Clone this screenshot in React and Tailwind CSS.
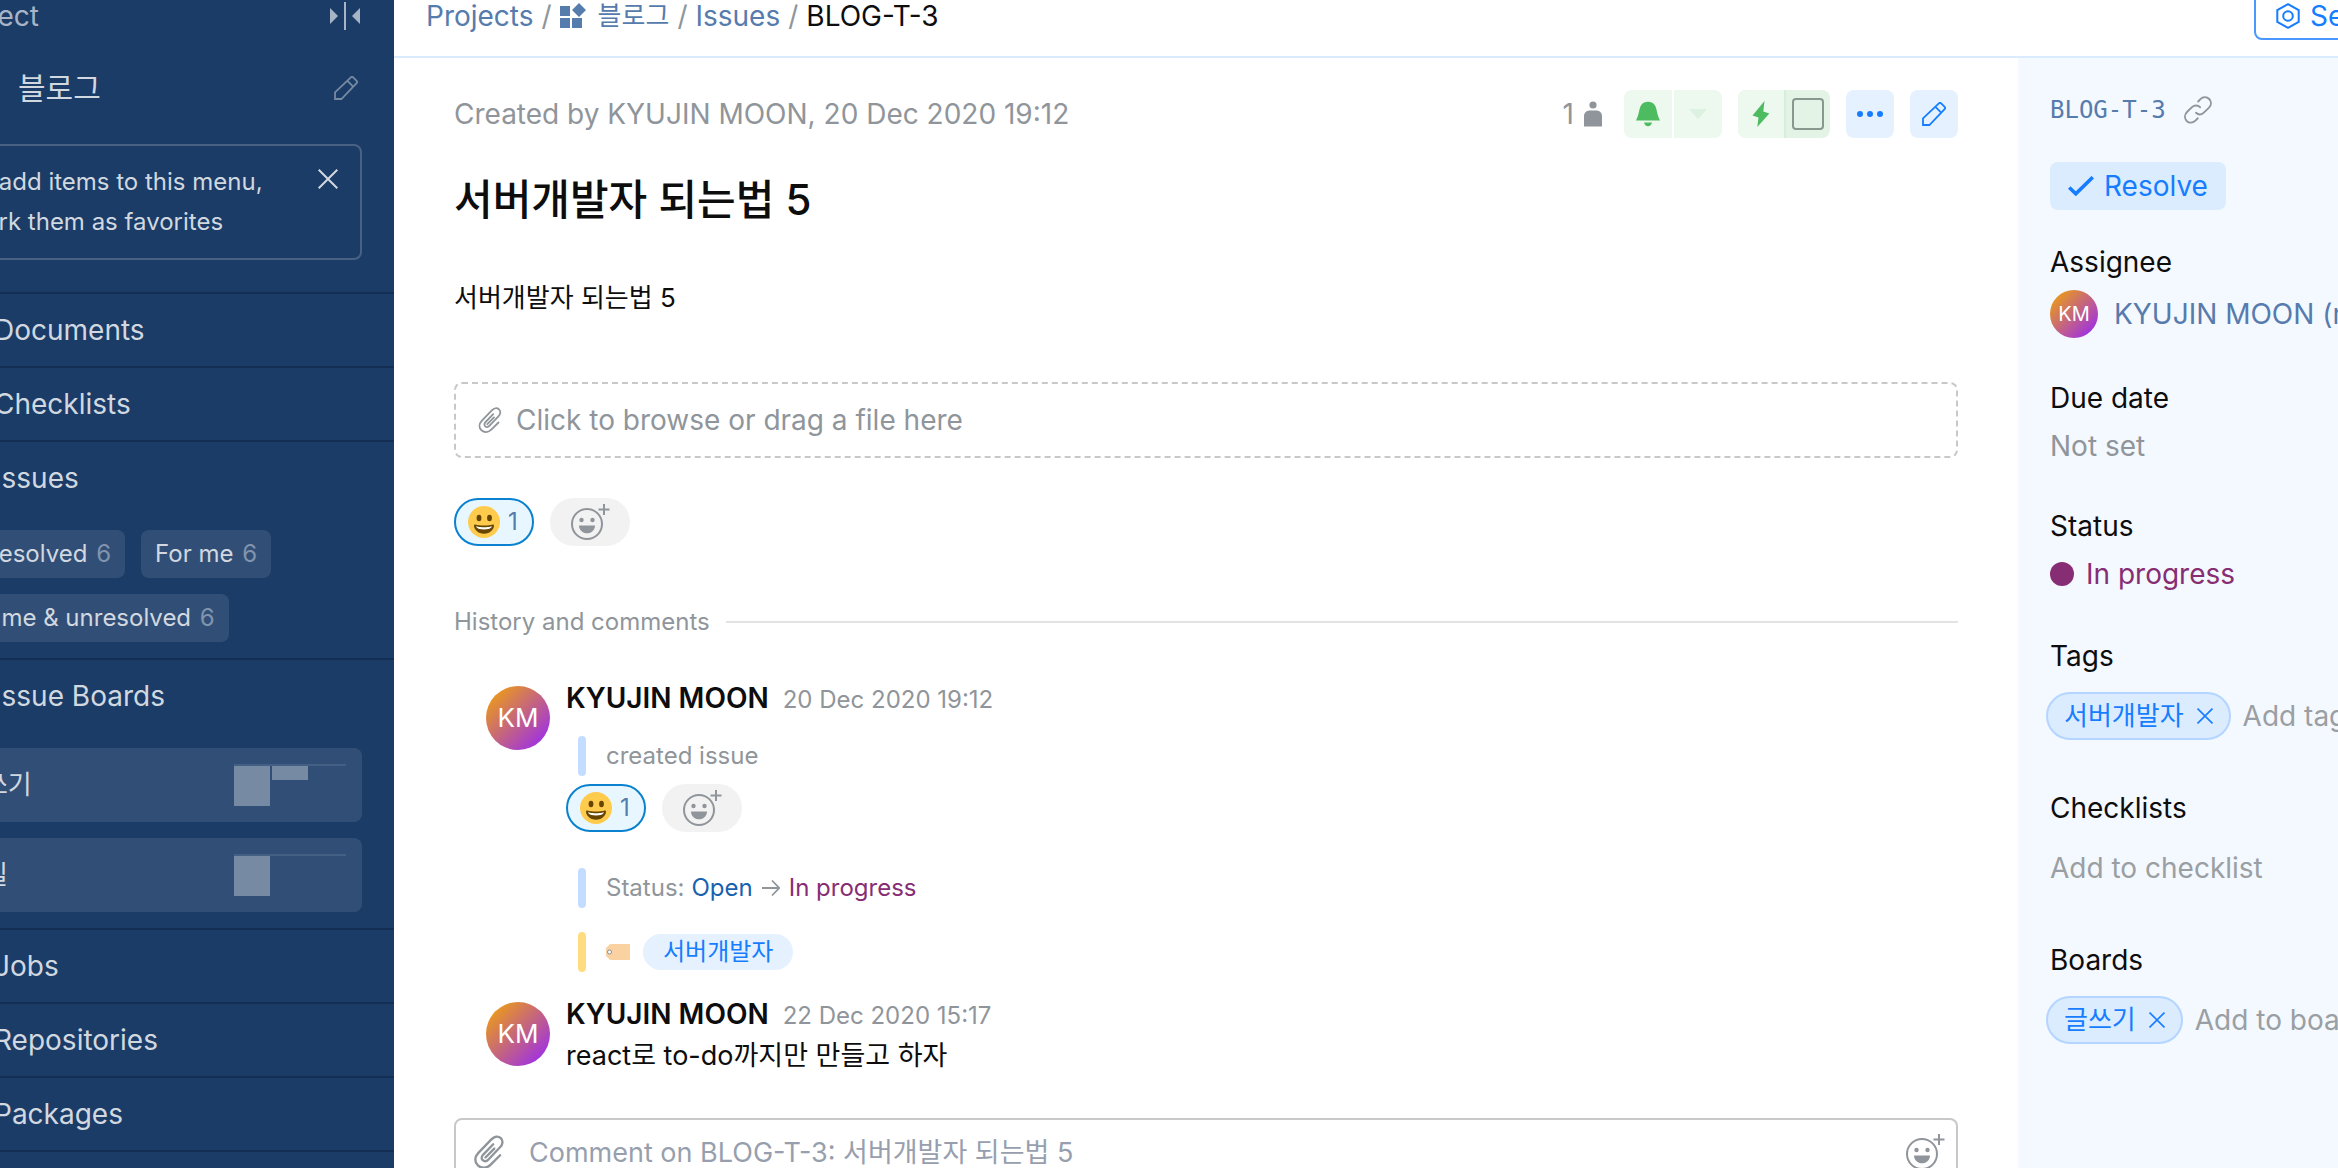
import React, { useState } from 'react';
import clsx from 'clsx';

const boards = [
    { name: '글쓰기', bars: ['h-10', 'h-[14px]'] },
    { name: '할일', bars: ['h-10'] },
];

const PencilIcon = ({ className }) => (
    <svg viewBox="0 0 24 24" fill="none" stroke="currentColor" strokeWidth="1.8" className={className}>
        <path d="M1 23v-6.6L16.6 1.6a2 2 0 0 1 2.8 0l3 3a2 2 0 0 1 0 2.8L7.4 23H1zM13.4 4.8l5.8 5.8" />
    </svg>
);

const CrossIcon = ({ className }) => (
    <svg viewBox="0 0 20 20" fill="none" stroke="currentColor" strokeWidth="2" className={className}>
        <path d="M.7.7l18.6 18.6M19.3.7L.7 19.3" />
    </svg>
);

const CollapseIcon = () => (
    <svg viewBox="0 0 30 28" className="h-7 w-[30px]" fill="currentColor">
        <path d="M0 6l8 8-8 8zM30 6l-8 8 8 8zM14 0h2v28h-2z" />
    </svg>
);

const ProjectIcon = () => (
    <svg viewBox="0 0 26 26" className="h-[26px] w-[26px]" fill="currentColor">
        <path d="M0 3h10v10H0zM0 15h10v10H0zM12 15h10v10H12zM19 0l7 7-7 7-7-7z" />
    </svg>
);

const PaperclipIcon = ({ className }) => (
    <svg viewBox="0 0 24 26" fill="none" stroke="currentColor" strokeWidth="1.8" strokeLinecap="round" className={className}>
        <path d="M20.5 15.5l-7.2 7.2c-3 3-7 3-9.8.6-2.700-2.600-2.600-6.400.2-9.400L13.800 3.300c2.200-2.200 5.200-2.800 7.200-.9s1.600 4.700-.6 7L11.600 18.700c-1.400 1.500-3.200 1.700-4.400.6s-1-2.900.4-4.300l7.600-7.900M9.300 17.200l6.700-6.800" />
    </svg>
);

const AddReactionIcon = () => (
    <svg viewBox="0 0 40 38" className="h-[38px] w-10 shrink-0 text-[#8f959a]" fill="none" stroke="currentColor" strokeWidth="2">
        <circle cx="17" cy="21" r="15" />
        <path d="M34 1v11M28.500 6.500h11" />
        <circle cx="11.500" cy="17" r="2.200" fill="currentColor" stroke="none" />
        <circle cx="22.500" cy="17" r="2.200" fill="currentColor" stroke="none" />
        <path d="M9 22.500h16c0 4.500-3.500 7.800-8 7.800s-8-3.300-8-7.800z" fill="currentColor" stroke="none" />
    </svg>
);

const GrinIcon = () => (
    <svg viewBox="0 0 32 32" className="h-8 w-8">
        <circle cx="16" cy="16" r="16" fill="#ffcb4c" />
        <ellipse cx="11" cy="12" rx="2.400" ry="3.200" fill="#664500" />
        <ellipse cx="21.500" cy="12" rx="2.400" ry="3.200" fill="#664500" />
        <path d="M16 19.500c-3.800 0-6.300-.4-8.800-1-.6-.1-1.200.3-1.200 1.100 0 4 4 8.200 10 8.200s10-4.200 10-8.200c0-.8-.6-1.200-1.200-1.100-2.500.6-5 1-8.800 1z" fill="#664500" />
        <path d="M8 20.300s2.700 1 8 1 8-1 8-1-.2 3.200-8 3.200-8-3.200-8-3.200z" fill="#fff" />
    </svg>
);

const PersonIcon = () => (
    <svg viewBox="0 0 18 26" className="h-[26px] w-[18px]" fill="currentColor">
        <circle cx="9" cy="4" r="3.600" />
        <path d="M0 25.500V15c0-3.400 2.600-5.500 6-5.500h6c3.400 0 6 2.100 6 5.500v10.500z" />
    </svg>
);

const BellIcon = () => (
    <svg viewBox="0 0 24 26" className="h-[26px] w-6" fill="#4dbb5f">
        <path d="M0 19.500C3.500 12.500 3 7.500 5 4.500 6.400 2 8.800.8 12 .8s5.600 1.200 7 3.700c2 3 1.500 8 5 15zM8 21.500h8c-.5 2.300-2 3.700-4 3.700s-3.500-1.400-4-3.700z" />
    </svg>
);

const BoltIcon = () => (
    <svg viewBox="0 0 18 26" className="h-[26px] w-[18px]" fill="#4dbb5f">
        <path d="M12.500 0L.5 14.500l6 2L5.300 26 17.300 12.500l-6-2z" />
    </svg>
);

const LinkIcon = () => (
    <svg viewBox="0 0 28 28" className="h-7 w-7" fill="none" stroke="currentColor" strokeWidth="1.900" strokeLinecap="round">
        <path d="M16 11.200c-2-2.300-5.600-2.300-8-.1l-4.800 4.700c-2.700 2.700-2.900 6.400-.6 9s6.200 2.400 8.800-.2l2.400-2.300" />
        <path d="M12 16.800c2.200 2 5.400 2 7.800-.2l5-4.700c2.700-2.700 2.800-6.400.4-8.900s-6.200-2.500-8.800.1L14.200 5.500" />
    </svg>
);

const HexIcon = () => (
    <svg viewBox="0 0 24 26" className="h-[26px] w-6" fill="none" stroke="currentColor" strokeWidth="2">
        <path d="M12 1.200l10.700 6v11.600L12 24.800 1.300 18.800V7.200z" />
        <circle cx="12" cy="13" r="4.800" />
    </svg>
);

const TagIcon = () => (
    <svg viewBox="0 0 24 16" className="h-4 w-6">
        <path d="M4 0h19a1 1 0 0 1 1 1v14a1 1 0 0 1-1 1H4L0 12V4z" fill="#fad1a1" />
        <circle cx="3.500" cy="8" r="2" fill="#fff" stroke="#8a8f94" />
    </svg>
);

const Avatar = ({ small }) => (
    <span
        className={clsx(
            'flex shrink-0 items-center justify-center rounded-full bg-linear-to-br/srgb from-[#f5a800] to-[#9422ff] text-white',
            small ? 'h-12 w-12 text-[20px]' : 'h-16 w-16 text-[26px]'
        )}
    >
        KM
    </span>
);

const NavRow = ({ children }) => (
    <a href="#" className="flex h-[72px] items-center pl-[82px]">{children}</a>
);

const NavSection = ({ title, children }) => (
    <section className="border-t-2 border-[#142f56]">
        <NavRow>{title}</NavRow>
        {children}
    </section>
);

const FilterChip = ({ label, count }) => (
    <button className="h-12 rounded-lg bg-[#314f76] px-[14px] text-[24px] whitespace-nowrap">
        {label} <span className="ml-[2px] text-[#8094ae]">{count}</span>
    </button>
);

const Reactions = ({ className }) => {
    const [count, setCount] = useState(1);

    return (
        <div className={clsx('flex gap-4', className)}>
            <button
                onClick={() => setCount(count === 1 ? 2 : 1)}
                className="flex h-12 w-20 items-center gap-2 rounded-full border-2 border-[#0a82d0] bg-[#e8f7ff] pl-3 text-[24px] text-[#567bad]"
            >
                <GrinIcon />
                {count}
            </button>
            <button aria-label="Add reaction" className="flex h-12 w-20 items-center justify-center rounded-full bg-[#f2f2f2]">
                <AddReactionIcon />
            </button>
        </div>
    );
};

const CommentHead = ({ date }) => (
    <div className="flex h-10 items-baseline gap-[14px] leading-10">
        <span className="font-semibold">KYUJIN MOON</span>
        <span className="text-[24px] text-[#8f959a]">{date}</span>
    </div>
);

const HistoryEvent = ({ bar, className, children }) => (
    <div className={clsx('ml-3 flex h-10 items-center gap-5 text-[24px] text-[#8f959a]', className)}>
        <span className={clsx('h-full w-2 rounded-full', bar)} />
        <div className="flex items-center gap-[7px]">{children}</div>
    </div>
);

const Pill = ({ children }) => (
    <span className="flex h-12 shrink-0 items-center gap-[13px] rounded-full border-2 border-[#b3d5ff] bg-[#dbecff] px-4 text-[26px] whitespace-nowrap text-[#167dff]">
        {children}
        <button aria-label="Remove">
            <CrossIcon className="h-4 w-4" />
        </button>
    </span>
);

const Sidebar = () => (
    <aside className="w-[394px] shrink-0 overflow-hidden bg-[#1b3c66] text-[#d1d8e0]">
        <div className="-ml-[88px]">
            <div className="flex h-8 items-center justify-between pr-[34px] pl-[34px] text-[#a8b5c6]">
                Project
                <button aria-label="Collapse menu"><CollapseIcon /></button>
            </div>
            <div className="flex h-28 items-center justify-between pr-9 pl-[106px]">
                <span className="text-[30px]">블로그</span>
                <button aria-label="Edit menu" className="text-[#768aa3]"><PencilIcon className="h-6 w-6" /></button>
            </div>
            <div className="mr-8 mb-8 ml-8 flex items-start justify-between rounded-lg border-2 border-[#496183] py-4 pr-[22px] pl-[18px] text-[24px] leading-10">
                <p>To add items to this menu,<br />mark them as favorites</p>
                <button aria-label="Dismiss" className="mt-[7px]"><CrossIcon className="h-5 w-5" /></button>
            </div>

            <NavSection title="Documents" />
            <NavSection title="Checklists" />
            <NavSection title="Issues">
                <div className="flex flex-wrap gap-4 pt-4 pr-8 pb-4 pl-8">
                    <FilterChip label="Unresolved" count={6} />
                    <FilterChip label="For me" count={6} />
                    <FilterChip label="For me & unresolved" count={6} />
                </div>
            </NavSection>
            <NavSection title="Issue Boards">
                <div className="flex flex-col gap-4 px-8 py-4">
                    {boards.map((board) => (
                        <a key={board.name} href="#" className="flex h-[74px] items-center justify-between rounded-lg bg-[#314f76] px-4 text-[26px]">
                            {board.name}
                            <span className="flex h-[42px] w-28 items-start gap-[2px] border-t-2 border-[#435f84]">
                                {board.bars.map((bar) => (
                                    <span key={bar} className={clsx('w-9 bg-[#768aa3]', bar)} />
                                ))}
                            </span>
                        </a>
                    ))}
                </div>
            </NavSection>
            <NavSection title="Jobs" />
            <NavSection title="Repositories" />
            <NavSection title="Packages" />
            <NavSection title="Members" />
        </div>
    </aside>
);

const TopBar = () => (
    <header className="flex h-[58px] shrink-0 items-start justify-between border-b-2 border-[#dbebff] pl-8">
        <nav className="flex h-8 items-center gap-2 text-[#567bad]">
            <a href="#">Projects</a>
            <span className="text-[#8f959a]">/</span>
            <a href="#" className="flex items-center gap-3">
                <ProjectIcon />
                <span className="text-[26px]">블로그</span>
            </a>
            <span className="text-[#8f959a]">/</span>
            <a href="#">Issues</a>
            <span className="text-[#8f959a]">/</span>
            <span className="text-[#0d0d0d]">BLOG-T-3</span>
        </nav>
        <div className="flex h-8 w-[84px] items-center">
            <button className="flex h-12 shrink-0 items-center gap-[10px] rounded-lg border-2 border-[#4a98ff] px-5 text-[#167dff]">
                <HexIcon />
                Settings
            </button>
        </div>
    </header>
);

const Toolbar = () => (
    <div className="flex h-12 items-center gap-4">
        <div className="flex items-center gap-[10px] pr-[6px] text-[#8f959a]">
            1
            <PersonIcon />
        </div>
        <div className="flex gap-[2px]">
            <button aria-label="Subscribed" className="flex h-12 w-12 items-center justify-center rounded-l-lg bg-[#edf8ef]">
                <BellIcon />
            </button>
            <button aria-label="Subscription options" className="flex h-12 w-12 items-center justify-center rounded-r-lg bg-[#edf8ef]">
                <svg viewBox="0 0 18 10" className="h-[10px] w-[18px]" fill="#dcf1df"><path d="M0 0h18l-9 10z" /></svg>
            </button>
        </div>
        <div className="flex h-12 overflow-hidden rounded-lg bg-[#e3f3e6]">
            <button aria-label="Quick actions" className="flex w-12 items-center justify-center border-r-2 border-[#d6efda] bg-[#edf8ef]">
                <BoltIcon />
            </button>
            <span className="flex w-11 items-center justify-center">
                <input
                    type="checkbox"
                    aria-label="Select issue"
                    className="h-8 w-8 appearance-none rounded-sm border-2 border-[#8a978f] checked:bg-[#4dbb5f]"
                />
            </span>
        </div>
        <button aria-label="More" className="flex h-12 w-12 items-center justify-center rounded-lg bg-[#e5f1ff]">
            <svg viewBox="0 0 26 6" className="h-[6px] w-[26px]" fill="#167dff">
                <circle cx="3" cy="3" r="3" /><circle cx="13" cy="3" r="3" /><circle cx="23" cy="3" r="3" />
            </svg>
        </button>
        <button aria-label="Edit" className="flex h-12 w-12 items-center justify-center rounded-lg bg-[#e5f1ff] text-[#167dff]">
            <PencilIcon className="h-6 w-6" />
        </button>
    </div>
);

const Issue = () => (
    <main className="min-w-0 flex-1 px-[60px] pt-8">
        <div className="flex items-center justify-between">
            <span className="text-[#8f959a]">Created by KYUJIN MOON, 20 Dec 2020 19:12</span>
            <Toolbar />
        </div>
        <h1 className="mt-9 text-[42px] leading-[52px] font-medium">서버개발자 되는법 5</h1>
        <p className="mt-[52px] text-[26px] leading-10">서버개발자 되는법 5</p>

        <button className="mt-16 flex h-[76px] w-full items-center gap-[14px] rounded-lg border-2 border-dashed border-[#c8c8c8] px-[22px] text-[#8f959a]">
            <PaperclipIcon className="h-[26px] w-6" />
            Click to browse or drag a file here
        </button>
        <Reactions className="mt-10" />

        <div className="mt-[60px] flex items-center gap-4">
            <h2 className="text-[24px] leading-8 text-[#8f959a]">History and comments</h2>
            <span className="h-[2px] flex-1 bg-[#e3e3e3]" />
        </div>

        <article className="mt-10 flex gap-4 pl-8">
            <div className="pt-2"><Avatar /></div>
            <div>
                <CommentHead date="20 Dec 2020 19:12" />
                <HistoryEvent bar="bg-[#c4dcff]" className="mt-[18px]">created issue</HistoryEvent>
                <Reactions className="mt-2" />
                <HistoryEvent bar="bg-[#c4dcff]" className="mt-9">
                    Status: <span className="text-[#1862af]">Open</span>
                    <svg viewBox="0 0 18 18" className="mx-[2px] h-[18px] w-[18px]" fill="none" stroke="currentColor" strokeWidth="1.800">
                        <path d="M0 9h17M10 1.500L17.200 9 10 16.500" />
                    </svg>
                    <span className="text-[#872d73]">In progress</span>
                </HistoryEvent>
                <HistoryEvent bar="bg-[#ffdc80]" className="mt-6">
                    <TagIcon />
                    <span className="ml-[6px] flex h-9 items-center rounded-full bg-[#e5f1ff] px-5 text-[#167dff]">서버개발자</span>
                </HistoryEvent>
            </div>
        </article>

        <article className="mt-[22px] flex gap-4 pl-8">
            <div className="pt-2"><Avatar /></div>
            <div>
                <CommentHead date="22 Dec 2020 15:17" />
                <p className="text-[27px] leading-[44px]">react로 to-do까지만 만들고 하자</p>
            </div>
        </article>

        <div className="mt-10 flex h-[68px] items-center rounded-lg border-2 border-[#c8c8c8] pr-[11px] pl-[17px] text-[#8f959a]">
            <button aria-label="Attach file"><PaperclipIcon className="h-[34px] w-8" /></button>
            <input
                type="text"
                aria-label="Comment"
                placeholder="Comment on BLOG-T-3: 서버개발자 되는법 5"
                className="ml-6 h-full min-w-0 flex-1 text-[27px] text-black outline-none placeholder:text-[#979fae]"
            />
            <button aria-label="Insert emoji"><AddReactionIcon /></button>
        </div>
    </main>
);

const Details = () => (
    <aside className="w-80 shrink-0 overflow-hidden bg-[#f4f8ff] pt-7 pl-8 leading-[48px] whitespace-nowrap">
        <div className="flex h-12 items-center gap-[18px]">
            <span className="font-['DejaVu_Sans_Mono',monospace] text-[24px] text-[#567bad]">BLOG-T-3</span>
            <button aria-label="Copy link" className="text-[#8f959a]"><LinkIcon /></button>
        </div>
        <button className="mt-7 flex h-12 items-center gap-[10px] rounded-lg bg-[#dbecff] px-[18px] text-[#167dff]">
            <svg viewBox="0 0 26 20" className="h-5 w-[26px]" fill="none" stroke="currentColor" strokeWidth="3.600">
                <path d="M1.200 11.500l6.600 6.300L24.800 1.200" />
            </svg>
            Resolve
        </button>

        <h3 className="mt-7">Assignee</h3>
        <div className="mt-1 flex items-center gap-4">
            <Avatar small />
            <a href="#" className="text-[#567bad]">KYUJIN MOON (me)</a>
        </div>

        <h3 className="mt-9">Due date</h3>
        <button className="block text-[#8f959a]">Not set</button>

        <h3 className="mt-8">Status</h3>
        <button className="flex items-center gap-3 text-[#872d73]">
            <span className="h-6 w-6 rounded-full bg-[#872d73]" />
            In progress
        </button>

        <label htmlFor="tags" className="mt-[34px] block">Tags</label>
        <div className="mt-3 -ml-1 flex gap-3">
            <Pill>서버개발자</Pill>
            <input id="tags" placeholder="Add tags" className="h-12 w-[200px] outline-none placeholder:text-[#9a9fa3]" />
        </div>

        <label htmlFor="checklists" className="mt-11 block">Checklists</label>
        <input id="checklists" placeholder="Add to checklist" className="mt-3 block h-12 w-full outline-none placeholder:text-[#9a9fa3]" />

        <label htmlFor="boards" className="mt-11 block">Boards</label>
        <div className="mt-3 -ml-1 flex gap-3">
            <Pill>글쓰기</Pill>
            <input id="boards" placeholder="Add to board" className="h-12 w-[200px] outline-none placeholder:text-[#9a9fa3]" />
        </div>
    </aside>
);

const App = () => {
    return (
        <div className="flex h-screen overflow-hidden bg-white font-[Inter,'Noto_Sans_CJK_KR',sans-serif] text-[28px] leading-10 text-[#0d0d0d]">
            <Sidebar />
            <div className="flex min-w-0 flex-1 flex-col">
                <TopBar />
                <div className="flex flex-1">
                    <Issue />
                    <Details />
                </div>
            </div>
        </div>
    );
};

export default App;
